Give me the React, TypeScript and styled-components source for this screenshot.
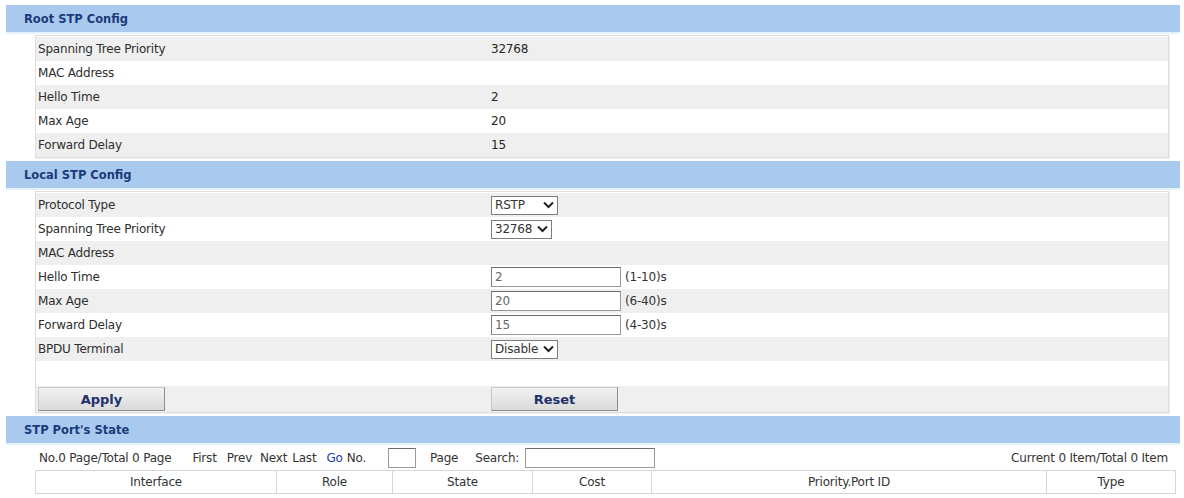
import React from "react";
import styled, { createGlobalStyle } from "styled-components";

const GlobalStyle = createGlobalStyle`
  html, body { margin: 0; padding: 0; background: #ffffff; }
  body {
    font-family: "DejaVu Sans", Verdana, sans-serif;
    font-size: 12px;
    letter-spacing: -0.2px;
    color: #2e2e2e;
  }
`;

const Page = styled.div`
  padding: 5px 4px 0 6px;
  width: 1174px;
`;

const SectionHeader = styled.div`
  height: 27px;
  display: flex;
  align-items: center;
  padding-left: 18px;
  background: #a9caee;
  color: #1b3a7a;
  font-weight: bold;
  font-size: 11.5px;
  letter-spacing: 0;
  box-shadow: 0 2px 0 #e4f3fa;
`;

const Panel = styled.div`
  margin: 3px 11px 3px 29px;
  padding-top: 1px;
  border: 1px solid #dddddd;
  box-shadow: 1px 1px 1px rgba(0, 0, 0, 0.06);
`;

const Row = styled.div<{ $alt?: boolean; $h?: number }>`
  display: grid;
  grid-template-columns: 455px 1fr;
  align-items: center;
  height: ${(p) => p.$h ?? 24}px;
  background: ${(p) => (p.$alt ? "#efefef" : "#ffffff")};
`;

const Label = styled.div`
  padding-left: 2px;
  color: #2e2e2e;
`;

const Value = styled.div`
  display: flex;
  align-items: center;
  color: #262626;
`;

const SelectBox = styled.div<{ $w: number }>`
  width: ${(p) => p.$w}px;
  height: 19px;
  box-sizing: border-box;
  display: flex;
  align-items: center;
  justify-content: space-between;
  padding: 0 3px 0 3px;
  border: 1px solid #7c7c7c;
  background: #ffffff;
  color: #333333;
`;

const TextInput = styled.div`
  width: 130px;
  height: 20px;
  box-sizing: border-box;
  display: flex;
  align-items: center;
  padding: 0 3px;
  border: 1px solid #9a9a9a;
  border-top-color: #6e6e6e;
  border-left-color: #7e7e7e;
  background: #ffffff;
  color: #666666;
`;

const Hint = styled.span`
  margin-left: 4px;
  color: #333333;
`;

const Button = styled.button<{ $ml?: number }>`
  width: 127px;
  height: 24px;
  margin-left: ${(p) => p.$ml ?? 0}px;
  border: 1px solid #9a9a9a;
  border-color: #c9c9c9 #8c8c8c #8c8c8c #c9c9c9;
  background: linear-gradient(#f2f2f2, #dadada);
  font-family: "DejaVu Sans", Verdana, sans-serif;
  font-weight: bold;
  font-size: 13px;
  letter-spacing: 0;
  color: #22306b;
  padding: 0;
`;

const ButtonCell = styled.div`
  display: flex;
  align-items: center;
`;

const Pager = styled.div`
  margin: 2px 11px 0 29px;
  height: 25px;
  display: flex;
  align-items: center;
  padding-left: 4px;
  color: #333333;
`;

const PagerItem = styled.span<{ $ml?: number; $blue?: boolean }>`
  margin-left: ${(p) => p.$ml ?? 0}px;
  color: ${(p) => (p.$blue ? "#2340b8" : "#333333")};
`;

const PagerInput = styled.div<{ $w: number; $ml: number }>`
  width: ${(p) => p.$w}px;
  height: 20px;
  box-sizing: border-box;
  margin-left: ${(p) => p.$ml}px;
  border: 1px solid #9a9a9a;
  border-top-color: #6e6e6e;
  background: #ffffff;
`;

const PagerRight = styled.span`
  margin-left: auto;
  padding-right: 1px;
`;

const Table = styled.table`
  margin: 0 11px 0 29px;
  width: 1134px;
  border-collapse: collapse;
  table-layout: fixed;
`;

const Th = styled.th<{ $w: number }>`
  width: ${(p) => p.$w}px;
  height: 22px;
  padding: 0;
  border: 1px solid #d6d6d6;
  font-weight: normal;
  text-align: center;
  color: #333333;
  background: #ffffff;
`;

const Chevron = () => (
  <svg width="11" height="8" viewBox="0 0 11 8">
    <path d="M1 1.5 L5.5 6 L10 1.5" fill="none" stroke="#222" strokeWidth="2" />
  </svg>
);

const Select = ({ w, text }: { w: number; text: string }) => (
  <SelectBox $w={w}>
    <span>{text}</span>
    <Chevron />
  </SelectBox>
);

export default function App() {
  return (
    <>
      <GlobalStyle />
      <Page>
        <SectionHeader>Root STP Config</SectionHeader>
        <Panel>
          <Row $alt>
            <Label>Spanning Tree Priority</Label>
            <Value>32768</Value>
          </Row>
          <Row>
            <Label>MAC Address</Label>
            <Value />
          </Row>
          <Row $alt>
            <Label>Hello Time</Label>
            <Value>2</Value>
          </Row>
          <Row>
            <Label>Max Age</Label>
            <Value>20</Value>
          </Row>
          <Row $alt>
            <Label>Forward Delay</Label>
            <Value>15</Value>
          </Row>
        </Panel>

        <SectionHeader>Local STP Config</SectionHeader>
        <Panel>
          <Row $alt>
            <Label>Protocol Type</Label>
            <Value>
              <Select w={67} text="RSTP" />
            </Value>
          </Row>
          <Row>
            <Label>Spanning Tree Priority</Label>
            <Value>
              <Select w={61} text="32768" />
            </Value>
          </Row>
          <Row $alt>
            <Label>MAC Address</Label>
            <Value />
          </Row>
          <Row>
            <Label>Hello Time</Label>
            <Value>
              <TextInput>2</TextInput>
              <Hint>(1-10)s</Hint>
            </Value>
          </Row>
          <Row $alt>
            <Label>Max Age</Label>
            <Value>
              <TextInput>20</TextInput>
              <Hint>(6-40)s</Hint>
            </Value>
          </Row>
          <Row>
            <Label>Forward Delay</Label>
            <Value>
              <TextInput>15</TextInput>
              <Hint>(4-30)s</Hint>
            </Value>
          </Row>
          <Row $alt>
            <Label>BPDU Terminal</Label>
            <Value>
              <Select w={67} text="Disable" />
            </Value>
          </Row>
          <Row $h={25}>
            <Label />
            <Value />
          </Row>
          <Row $alt $h={26}>
            <ButtonCell>
              <Button $ml={2}>Apply</Button>
            </ButtonCell>
            <ButtonCell>
              <Button>Reset</Button>
            </ButtonCell>
          </Row>
        </Panel>

        <SectionHeader>STP Port's State</SectionHeader>
        <Pager>
          <PagerItem>No.0 Page/Total 0 Page</PagerItem>
          <PagerItem $ml={21}>First</PagerItem>
          <PagerItem $ml={10}>Prev</PagerItem>
          <PagerItem $ml={8}>Next</PagerItem>
          <PagerItem $ml={5}>Last</PagerItem>
          <PagerItem $ml={10} $blue>
            Go
          </PagerItem>
          <PagerItem $ml={4}>No.</PagerItem>
          <PagerInput $w={28} $ml={22} />
          <PagerItem $ml={14}>Page</PagerItem>
          <PagerItem $ml={17}>Search:</PagerItem>
          <PagerInput $w={130} $ml={6} />
          <PagerRight>Current 0 Item/Total 0 Item</PagerRight>
        </Pager>
        <Table>
          <thead>
            <tr>
              <Th $w={240}>Interface</Th>
              <Th $w={115}>Role</Th>
              <Th $w={139}>State</Th>
              <Th $w={118}>Cost</Th>
              <Th $w={394}>Priority.Port ID</Th>
              <Th $w={128}>Type</Th>
            </tr>
          </thead>
        </Table>
      </Page>
    </>
  );
}
